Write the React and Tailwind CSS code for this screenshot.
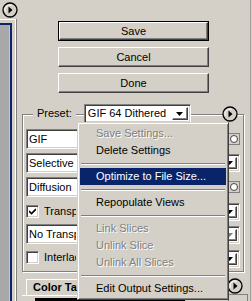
import React from 'react'

const raised = 'border border-t-white border-l-white border-r-[#404040] border-b-[#404040] shadow-[inset_-1px_-1px_0_#808080]'
const sunken = 'border border-t-[#808080] border-l-[#808080] border-r-white border-b-white shadow-[inset_1px_1px_0_#404040,inset_-1px_-1px_0_#d4d0c8]'

const CircleArrow = () => (
  <svg width="16" height="16" viewBox="0 0 16 16">
    <circle cx="8" cy="8" r="7" fill="#d4d0c8" stroke="#000" strokeWidth="1.3" />
    <path d="M3.2 9.8 A5.2 5.2 0 0 1 9.8 3.2" fill="none" stroke="#fff" strokeWidth="1" />
    <path d="M6.5 4.5 L10.5 8 L6.5 11.5 Z" fill="#000" />
  </svg>
)

const DownTri = ({ color = '#000' }) => (
  <svg width="7" height="4" viewBox="0 0 7 4">
    <path d="M0 0 H7 L3.5 4 Z" fill={color} />
  </svg>
)

const Button = ({ children, isDefault }) => (
  <div className={isDefault ? 'border border-black' : ''}>
    <div className={`${raised} flex items-center justify-center ${isDefault ? 'h-[18px]' : 'h-[20px]'} text-[11px] text-black`}>
      {children}
    </div>
  </div>
)

// text is clipped where the popup menu covers the field
const Field = ({ text, className = '' }) => (
  <div className={`${sunken} bg-white h-[20px] w-[110px] flex items-center pl-[2px] text-[11px] ${className}`}>
    <span className="w-[47px] overflow-hidden whitespace-nowrap">{text}</span>
  </div>
)

const Check = ({ checked, label }) => (
  <div className="flex items-center h-[13px]">
    <div className={`${sunken} bg-white w-[13px] h-[13px] flex items-center justify-center`}>
      {checked && (
        <svg width="7" height="7" viewBox="0 0 7 7">
          <path d="M0 3 L2.5 5.5 L7 1" fill="none" stroke="#000" strokeWidth="1.6" />
        </svg>
      )}
    </div>
    <span className="ml-[5px] w-[32px] overflow-hidden whitespace-nowrap text-[11px]">{label}</span>
  </div>
)

const MaskBtn = ({ className = '' }) => (
  <div className={`w-[12px] h-[12px] border border-[#808080] bg-[#d4d0c8] flex items-center justify-center ${className}`}>
    <div className="w-[8px] h-[8px] rounded-full border border-[#404040] bg-white" />
  </div>
)

const ArrowCombo = ({ className = '', disabled }) => (
  <div className={`${sunken} bg-white w-[40px] h-[18px] flex justify-end p-[2px] ${className}`}>
    <div className={`${raised} w-[16px] h-full flex items-center justify-center`}>
      <DownTri color={disabled ? '#808080' : '#000'} />
    </div>
  </div>
)

const MenuItem = ({ children, disabled, active }) => (
  <div
    className={`h-[17px] flex items-center pl-[16px] text-[11px] ${
      active ? 'bg-[#0a246a] text-white' : disabled ? 'text-[#808080] [text-shadow:1px_1px_0_#fff]' : 'text-black'
    }`}
  >
    {children}
  </div>
)

const Sep = () => (
  <div className="h-[9px] flex items-center px-[1px]">
    <div className="w-full h-[2px] border-t border-t-[#808080] border-b border-b-white" />
  </div>
)

export default function App() {
  return (
    <div className="relative w-[252px] h-[301px] overflow-hidden bg-[#d4d0c8] flex font-['Liberation_Sans',sans-serif] text-black">
      {/* left image strip */}
      <div className="w-[16px] flex flex-col shrink-0">
        <div className="mt-[2px] ml-[2px]"><CircleArrow /></div>
        <div className="mt-[1px] flex-1 border-t border-t-white border-r border-r-white shadow-[1px_0_0_#808080] pt-[3px] pr-[3px]">
          <div className="h-full border-t-2 border-r-2 border-[#0a246a] bg-[#a8a8a8] shadow-[inset_-1px_0_0_#c8c8c8]" />
        </div>
      </div>

      {/* main */}
      <div className="w-[234px] flex flex-col shrink-0">
        <div className="ml-[42px] w-[151px] mt-[21px] flex flex-col gap-[6px]">
          <Button isDefault>Save</Button>
          <Button>Cancel</Button>
          <Button>Done</Button>
        </div>

        {/* preset group */}
        <div className="ml-[6px] w-[222px] mt-[21px] border border-[#808080] shadow-[inset_1px_1px_0_#fff,1px_1px_0_#fff]">
          <div className="-mt-[11px] h-[19px] flex items-center">
            <span className="ml-[10px] px-[4px] bg-[#d4d0c8] text-[11px]">Preset:</span>
            <div className={`${sunken} ml-[8px] w-[107px] h-[19px] bg-white flex items-center p-[2px]`}>
              <span className="flex-1 pl-[1px] text-[11px] whitespace-nowrap overflow-hidden">GIF 64 Dithered</span>
              <div className={`${raised} w-[16px] h-full flex items-center justify-center`}>
                <DownTri />
              </div>
            </div>
            <div className="ml-auto mr-[5px]"><CircleArrow /></div>
          </div>

          <div className="flex justify-between">
            <div className="pl-[3px] pb-[7px] flex flex-col">
              <Field text="GIF" className="mt-[6px]" />
              <Field text="Selective" className="mt-[4px]" />
              <Field text="Diffusion" className="mt-[4px]" />
              <div className="mt-[8px]"><Check checked label="Transparency" /></div>
              <Field text="No Transparency Dither" className="mt-[6px]" />
              <div className="mt-[7px]"><Check label="Interlaced" /></div>
            </div>
            <div className="pr-[3px] flex flex-col items-end">
              <MaskBtn className="mt-[10px]" />
              <ArrowCombo className="mt-[9px]" />
              <MaskBtn className="mt-[9px]" />
              <ArrowCombo className="mt-[10px] h-[17px]" />
              <ArrowCombo className="mt-[5px] h-[17px]" disabled />
              <ArrowCombo className="mt-[6px] h-[17px]" />
            </div>
          </div>
        </div>

        {/* color table tabs */}
        <div className="ml-[6px] mt-[7px] flex">
          <div className="flex flex-col flex-1">
            <div className="pl-[4px] flex">
              <div className="h-[16px] w-[52px] overflow-hidden whitespace-nowrap border-t border-l border-white pl-[6px] flex items-center text-[11px] font-bold">
                Color Table
              </div>
            </div>
            <div className="border-t border-white h-[6px] pl-[13px] pt-[2px]">
              <div className="w-[150px] h-[4px] bg-black" />
            </div>
          </div>
          <div className="flex flex-col items-start mr-[2px]">
            <div className="-mt-[1px]"><CircleArrow /></div>
            <div className="ml-[1px] w-[20px] h-[8px] border border-[#808080] border-b-0" />
          </div>
        </div>
      </div>

      {/* right edge */}
      <div className="w-[2px] border-l border-[#a0a0a0]" />

      {/* popup menu */}
      <div className="absolute left-[77px] top-[122px] w-[152px] bg-[#d4d0c8] border border-t-[#d4d0c8] border-l-[#d4d0c8] border-r-[#404040] border-b-[#404040] shadow-[inset_1px_1px_0_#fff,inset_-1px_-1px_0_#808080] p-[2px]">
        <MenuItem disabled>Save Settings...</MenuItem>
        <MenuItem>Delete Settings</MenuItem>
        <Sep />
        <MenuItem active>Optimize to File Size...</MenuItem>
        <Sep />
        <MenuItem>Repopulate Views</MenuItem>
        <Sep />
        <MenuItem disabled>Link Slices</MenuItem>
        <MenuItem disabled>Unlink Slice</MenuItem>
        <MenuItem disabled>Unlink All Slices</MenuItem>
        <Sep />
        <MenuItem>Edit Output Settings...</MenuItem>
      </div>
    </div>
  )
}
